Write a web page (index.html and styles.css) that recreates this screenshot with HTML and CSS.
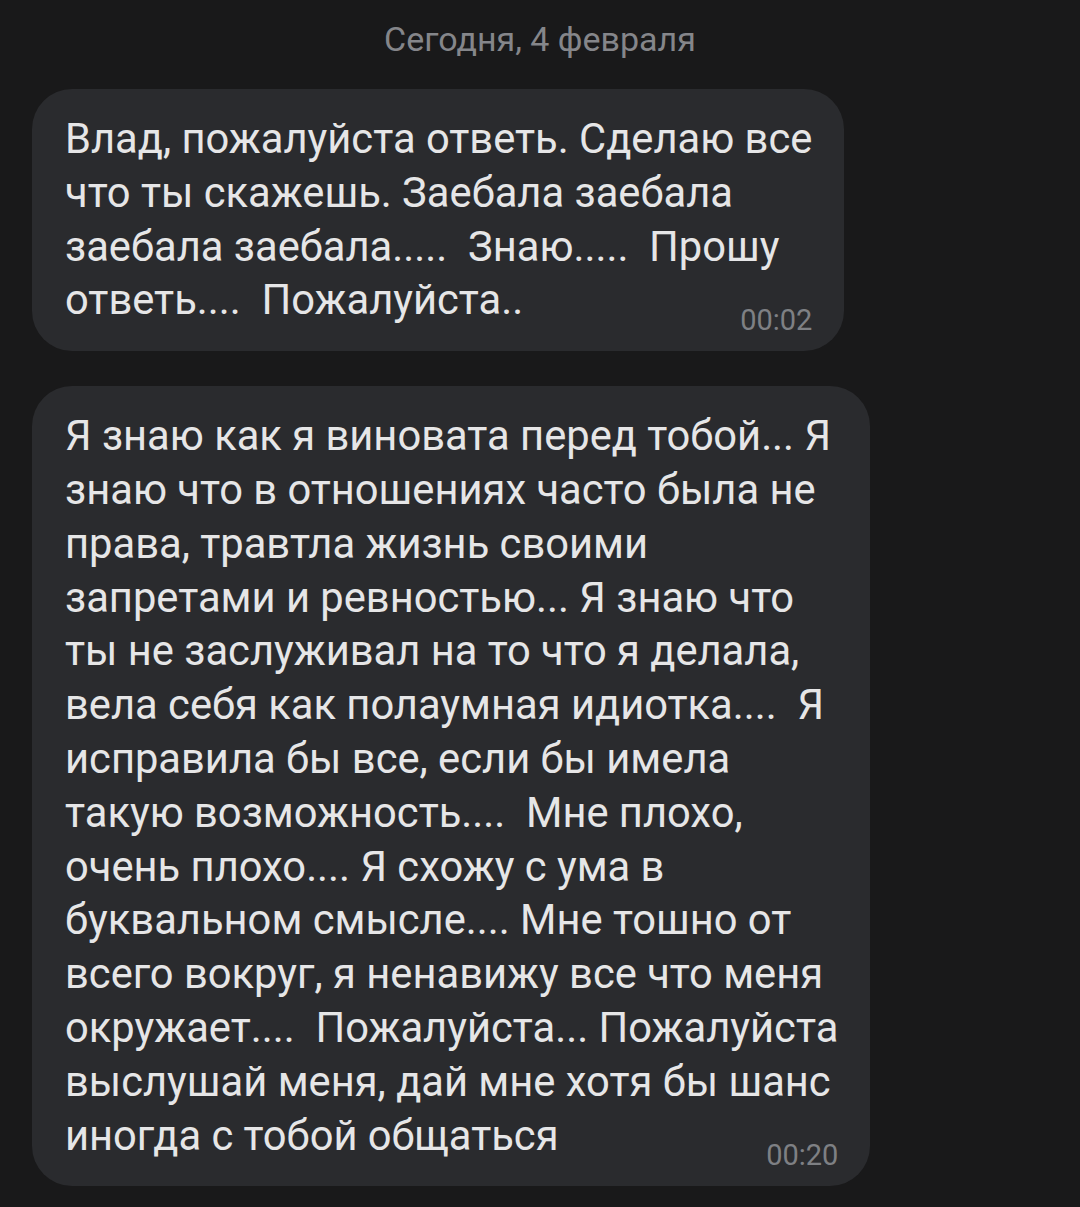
FILE: index.html
```html
<!DOCTYPE html>
<html lang="ru">
<head>
<meta charset="utf-8">
<link rel="stylesheet" href="styles.css">
</head>
<body>
<div class="chat">
  <div class="date">Сегодня, 4 февраля</div>
  <div class="bubble">
    <p class="text">Влад, пожалуйста ответь. Сделаю все<br>что ты скажешь. Заебала заебала<br>заебала заебала.....&nbsp; Знаю.....&nbsp; Прошу<br>ответь....&nbsp; Пожалуйста..</p>
    <span class="time">00:02</span>
  </div>
  <div class="bubble">
    <p class="text">Я знаю как я виновата перед тобой... Я<br>знаю что в отношениях часто была не<br>права, травтла жизнь своими<br>запретами и ревностью... Я знаю что<br>ты не заслуживал на то что я делала,<br>вела себя как полаумная идиотка....&nbsp; Я<br>исправила бы все, если бы имела<br>такую возможность....&nbsp; Мне плохо,<br>очень плохо.... Я схожу с ума в<br>буквальном смысле.... Мне тошно от<br>всего вокруг, я ненавижу все что меня<br>окружает....&nbsp; Пожалуйста... Пожалуйста<br>выслушай меня, дай мне хотя бы шанс<br>иногда с тобой общаться</p>
    <span class="time">00:20</span>
  </div>
</div>
</body>
</html>
```
FILE: styles.css
```css
html, body {
  margin: 0;
  padding: 0;
  background: #19191a;
  height: 100%;
}
body {
  font-family: Roboto, "Noto Sans", sans-serif;
  color: #e6e6e7;
}
.chat {
  display: flex;
  flex-direction: column;
  align-items: flex-start;
  padding: 0 32px;
  gap: 35px;
}
.date {
  align-self: center;
  margin-top: 19px;
  margin-bottom: -5px;
  font-size: 34px;
  line-height: 40px;
  color: #85868a;
}
.bubble {
  display: grid;
  background: #2a2b2e;
  border-radius: 40px;
  padding: 23px 32px 16px 33px;
}
.text {
  grid-area: 1 / 1;
  margin: 0 0 8px;
  font-size: 41.7px;
  line-height: 53.8px;
  white-space: nowrap;
}
.time {
  grid-area: 1 / 1;
  align-self: end;
  justify-self: end;
  font-size: 29px;
  line-height: 30px;
  color: #7e8084;
}
```
